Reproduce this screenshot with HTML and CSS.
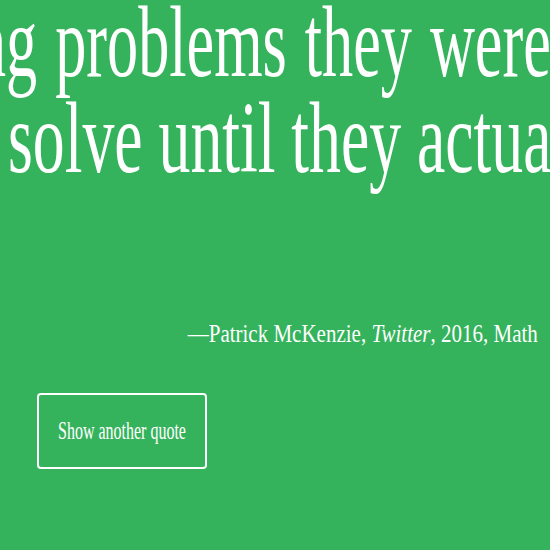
FILE: index.html
```html
<!DOCTYPE html>
<html lang="en">
<head>
<meta charset="utf-8">
<title>Quote</title>
<link rel="stylesheet" href="styles.css">
</head>
<body>
<main class="page">
  <blockquote class="quote">
    <span class="quote-line line-1">ng problems they were</span>
    <span class="quote-line line-2">solve until they actually</span>
  </blockquote>
  <p class="cite"><span class="cite-text">—Patrick McKenzie, <em>Twitter</em>, 2016, Math</span></p>
  <button class="btn" type="button"><span class="btn-text">Show another quote</span></button>
</main>
</body>
</html>
```
FILE: styles.css
```css
html, body {
  margin: 0;
  padding: 0;
  background: #35b35c;
  overflow: hidden;
}
.page {
  width: 550px;
  height: 550px;
  overflow: hidden;
  color: #ffffff;
  font-family: "Liberation Serif", "Times New Roman", serif;
}
.quote {
  margin: -6px 0 0 0;
  padding: 0;
  font-size: 102px;
  line-height: 96px;
}
.quote-line {
  display: block;
  height: 96px;
  white-space: nowrap;
  transform-origin: 0 0;
}
.line-1 {
  margin-left: -25px;
  word-spacing: 4px;
  transform: scaleX(0.61);
}
.line-2 {
  margin-left: 8px;
  transform: scaleX(0.625);
}
.cite {
  margin: 133px 12px 0 0;
  font-size: 25px;
  line-height: 30px;
  text-align: right;
  white-space: nowrap;
}
.cite-text {
  display: inline-block;
  transform: scaleX(0.84);
  transform-origin: 100% 0;
}
.cite em { font-style: italic; }
.btn {
  margin: 44px 0 0 37px;
  width: 170px;
  height: 76px;
  display: flex;
  align-items: center;
  justify-content: center;
  background: transparent;
  border: 2px solid #ffffff;
  border-radius: 4px;
  color: #ffffff;
  font-family: "Liberation Serif", "Times New Roman", serif;
  font-size: 25px;
  padding: 0;
  white-space: nowrap;
}
.btn-text {
  display: inline-block;
  transform: scaleX(0.64);
}
```
